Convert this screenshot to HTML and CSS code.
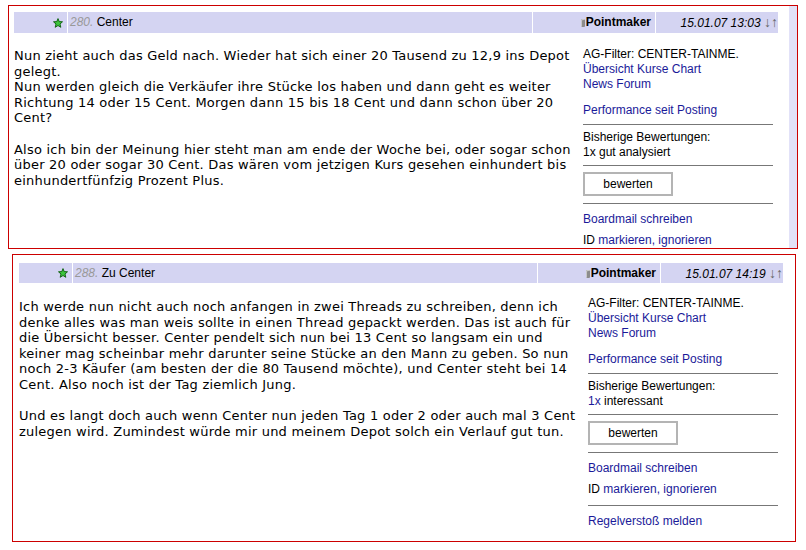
FILE: index.html
```html
<!DOCTYPE html>
<html lang="de">
<head>
<meta charset="utf-8">
<title>Forum</title>
<link rel="stylesheet" href="styles.css">
</head>
<body>
<div class="post p1">
  <div class="main">
    <div class="head">
      <div class="hc star-cell"><svg class="star" viewBox="0 0 10 10" width="10" height="10"><polygon points="5,0.6 6.2,3.6 9.5,3.8 7,6 7.8,9.3 5,7.5 2.2,9.3 3,6 0.5,3.8 3.8,3.6" fill="#3cc43c" stroke="#0a5a0a" stroke-width="0.9"/></svg></div>
      <div class="hc title"><span class="num">280.</span> Center</div>
      <div class="hc author"><span class="dev"></span>Pointmaker</div>
      <div class="hc date">15.01.07 13:03 <span class="arr">↓↑</span></div>
    </div>
    <div class="body">
      <div class="text">Nun zieht auch das Geld nach. Wieder hat sich einer 20 Tausend zu 12,9 ins Depot<br>gelegt.<br>Nun werden gleich die Verkäufer ihre Stücke los haben und dann geht es weiter<br>Richtung 14 oder 15 Cent. Morgen dann 15 bis 18 Cent und dann schon über 20<br>Cent?<br><br>Also ich bin der Meinung hier steht man am ende der Woche bei, oder sogar schon<br>über 20 oder sogar 30 Cent. Das wären vom jetzigen Kurs gesehen einhundert bis<br>einhundertfünfzig Prozent Plus.</div>
      <div class="side">
        <div>AG-Filter: CENTER-TAINME.</div>
        <div><a>Übersicht</a> <a>Kurse</a> <a>Chart</a></div>
        <div><a>News</a> <a>Forum</a></div>
        <div class="perf"><a>Performance seit Posting</a></div>
        <div class="rule r1"></div>
        <div>Bisherige Bewertungen:</div>
        <div>1x gut analysiert</div>
        <div class="rule r2"></div>
        <div class="btn">bewerten</div>
        <div class="rule r3"></div>
        <div class="mail"><a>Boardmail schreiben</a></div>
        <div class="idl">ID <a>markieren, ignorieren</a></div>
      </div>
    </div>
  </div>
  <div class="strip"></div>
</div>

<div class="post p2">
  <div class="main">
    <div class="head">
      <div class="hc star-cell"><svg class="star" viewBox="0 0 10 10" width="10" height="10"><polygon points="5,0.6 6.2,3.6 9.5,3.8 7,6 7.8,9.3 5,7.5 2.2,9.3 3,6 0.5,3.8 3.8,3.6" fill="#3cc43c" stroke="#0a5a0a" stroke-width="0.9"/></svg></div>
      <div class="hc title"><span class="num">288.</span> Zu Center</div>
      <div class="hc author"><span class="dev"></span>Pointmaker</div>
      <div class="hc date">15.01.07 14:19 <span class="arr">↓↑</span></div>
    </div>
    <div class="body">
      <div class="text">Ich werde nun nicht auch noch anfangen in zwei Threads zu schreiben, denn ich<br>denke alles was man weis sollte in einen Thread gepackt werden. Das ist auch für<br>die Übersicht besser. Center pendelt sich nun bei 13 Cent so langsam ein und<br>keiner mag scheinbar mehr darunter seine Stücke an den Mann zu geben. So nun<br>noch 2-3 Käufer (am besten der die 80 Tausend möchte), und Center steht bei 14<br>Cent. Also noch ist der Tag ziemlich Jung.<br><br>Und es langt doch auch wenn Center nun jeden Tag 1 oder 2 oder auch mal 3 Cent<br>zulegen wird. Zumindest würde mir und meinem Depot solch ein Verlauf gut tun.</div>
      <div class="side">
        <div>AG-Filter: CENTER-TAINME.</div>
        <div><a>Übersicht</a> <a>Kurse</a> <a>Chart</a></div>
        <div><a>News</a> <a>Forum</a></div>
        <div class="perf"><a>Performance seit Posting</a></div>
        <div class="rule r1"></div>
        <div>Bisherige Bewertungen:</div>
        <div><a>1x</a> interessant</div>
        <div class="rule r2"></div>
        <div class="btn">bewerten</div>
        <div class="rule r3"></div>
        <div class="mail"><a>Boardmail schreiben</a></div>
        <div class="idl">ID <a>markieren, ignorieren</a></div>
        <div class="rule r4"></div>
        <div class="regel"><a>Regelverstoß melden</a></div>
      </div>
    </div>
  </div>
</div>
</body>
</html>
```

FILE: styles.css
```css
html, body {
  margin: 0;
  padding: 0;
  background: #ffffff;
}

body {
  font-family: "Liberation Sans", Arial, sans-serif;
  font-size: 12px;
  color: #000;
}

.post {
  box-sizing: border-box;
  border: 1px solid #cc0000;
  display: flex;
  overflow: hidden;
}

.p1 {
  margin: 5px 0 0 8px;
  width: 790px;
  height: 244px;
}

.p2 {
  margin: 5px 0 0 12px;
  width: 784px;
  height: 288px;
}

.main {
  flex: 1;
  min-width: 0;
}

.p1 .main {
  padding: 6px 11px 0 5px;
}

.p2 .main {
  padding: 8px 12px 0 6px;
}

.strip {
  width: 8px;
  background: #e2e2f8;
}

.head {
  display: flex;
  gap: 1px;
  height: 20px;
  line-height: 20px;
}

.p1 .head {
  height: 21px;
  line-height: 21px;
}

.hc {
  background: #d4d4f2;
  white-space: nowrap;
}

.star-cell {
  width: 53px;
  box-sizing: border-box;
  padding-right: 4px;
  display: flex;
  align-items: center;
  justify-content: flex-end;
}

.star {
  display: block;
}

.title {
  flex: 1;
  padding-left: 2px;
}

.num {
  color: #999999;
  font-style: italic;
}

.author {
  width: 122px;
  box-sizing: border-box;
  text-align: right;
  padding-right: 4px;
  font-weight: bold;
}

.dev {
  display: inline-block;
  width: 4px;
  height: 8px;
  margin-right: 1px;
  vertical-align: -1px;
  background: #8c8c8c;
  border-radius: 1px;
  box-shadow: inset 1px 1px 0 #c8c8c8;
}

.date {
  width: 122px;
  box-sizing: border-box;
  text-align: right;
  padding-right: 0;
  font-style: italic;
}

.arr {
  font-style: normal;
  font-size: 14px;
  color: #666666;
  letter-spacing: 0;
}

.body {
  display: flex;
}

.text {
  width: 565px;
  padding-top: 16px;
  font-family: "DejaVu Sans", Verdana, sans-serif;
  font-size: 13px;
  line-height: 15.6px;
  letter-spacing: 0.22px;
  white-space: nowrap;
}

.p1 .text {
  padding-top: 15px;
}

.side {
  width: 190px;
  margin-left: 4px;
  padding-top: 13px;
  font-size: 12px;
  line-height: 15px;
}

.p1 .side {
  padding-top: 14px;
}

.side a {
  color: #1a1a99;
  text-decoration: none;
}

.perf {
  margin-top: 11px;
}

.rule {
  border-top: 1px solid #777777;
}

.r1 {
  margin: 6px 0 5px;
}

.r2 {
  margin: 5px 0 6px;
}

.r3 {
  margin: 7px 0 8px;
}

.r4 {
  margin: 8px 0 8px;
}

.btn {
  width: 90px;
  height: 24px;
  box-sizing: border-box;
  border: 2px solid #b4b4b4;
  text-align: center;
  line-height: 20px;
  background: #fff;
}

.idl {
  margin-top: 6px;
}
```
